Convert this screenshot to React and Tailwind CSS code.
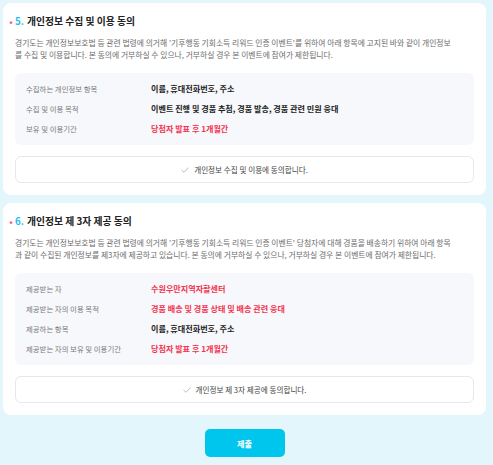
import React from "react";

const font = { fontFamily: '"Noto Sans CJK KR", "Noto Sans", sans-serif' };

function Check() {
  return (
    <svg width="8" height="6" viewBox="0 0 8 6" className="shrink-0">
      <polyline points="0.5,3 3,5.3 7.5,0.6" fill="none" stroke="#b9bec4" strokeWidth="1" />
    </svg>
  );
}

function Row({ label, value, red }) {
  return (
    <div className="flex h-[20px] items-center">
      <div className="w-[125px] shrink-0 text-[7.4px] text-[#7a7a7a]">{label}</div>
      <div className={"text-[8.1px] font-bold " + (red ? "text-[#f5334f]" : "text-[#222222]")}>{value}</div>
    </div>
  );
}

function Card({ num, title, lines, rows, agree }) {
  return (
    <div className="rounded-[8px] bg-white px-[12px] pt-[11px] pb-[12px]">
      <div className="flex h-[15px] items-center">
        <span className="ml-[-6px] mt-[5px] w-[6px] text-[8px] font-bold text-[#ff4d6a] leading-none">*</span>
        <span className="text-[9.8px] font-bold text-[#1fc0ea]">{num}.</span>
        <span className="ml-[3px] text-[9.8px] font-bold text-[#222222]">{title}</span>
      </div>
      <div className="mt-[8px] text-[7.8px] leading-[11.5px] text-[#6b6b6b]">
        {lines[0]}
        <br />
        {lines[1]}
      </div>
      <div className="mt-[13px] rounded-[6px] bg-[#f6f8fb] px-[11px] py-[6px]">
        {rows.map((r) => (
          <Row key={r[0]} label={r[0]} value={r[1]} red={r[2]} />
        ))}
      </div>
      <div className="mt-[11px] flex h-[27px] items-center justify-center gap-[5px] rounded-[6px] border border-[#e6e8eb] bg-white">
        <Check />
        <span className="text-[7.6px] text-[#444444]">{agree}</span>
      </div>
    </div>
  );
}

export default function App() {
  return (
    <div style={font} className="min-h-[465px] w-[493px] bg-[#e3f6fb] pt-[3px] pb-[9px]">
      <div className="ml-[3px] flex w-[483px] flex-col gap-[8px]">
        <Card
          num="5"
          title="개인정보 수집 및 이용 동의"
          lines={[
            "경기도는 개인정보보호법 등 관련 법령에 의거해 '기후행동 기회소득 리워드 인증 이벤트'를 위하여 아래 항목에 고지된 바와 같이 개인정보",
            "를 수집 및 이용합니다. 본 동의에 거부하실 수 있으나, 거부하실 경우 본 이벤트에 참여가 제한됩니다.",
          ]}
          rows={[
            ["수집하는 개인정보 항목", "이름, 휴대전화번호, 주소", false],
            ["수집 및 이용 목적", "이벤트 진행 및 경품 추첨, 경품 발송, 경품 관련 민원 응대", false],
            ["보유 및 이용기간", "당첨자 발표 후 1개월간", true],
          ]}
          agree="개인정보 수집 및 이용에 동의합니다."
        />
        <Card
          num="6"
          title="개인정보 제 3자 제공 동의"
          lines={[
            "경기도는 개인정보보호법 등 관련 법령에 의거해 '기후행동 기회소득 리워드 인증 이벤트' 당첨자에 대해 경품을 배송하기 위하여 아래 항목",
            "과 같이 수집된 개인정보를 제3자에 제공하고 있습니다. 본 동의에 거부하실 수 있으나, 거부하실 경우 본 이벤트에 참여가 제한됩니다.",
          ]}
          rows={[
            ["제공받는 자", "수원우만지역자활센터", true],
            ["제공받는 자의 이용 목적", "경품 배송 및 경품 상태 및 배송 관련 응대", true],
            ["제공하는 항목", "이름, 휴대전화번호, 주소", false],
            ["제공받는 자의 보유 및 이용기간", "당첨자 발표 후 1개월간", true],
          ]}
          agree="개인정보 제 3자 제공에 동의합니다."
        />
        <div className="mt-[6px] flex justify-center">
          <button className="flex h-[28px] w-[80px] items-center justify-center rounded-[5px] bg-[#00c6ee] text-[8.2px] font-bold text-white">
            제출
          </button>
        </div>
      </div>
    </div>
  );
}
